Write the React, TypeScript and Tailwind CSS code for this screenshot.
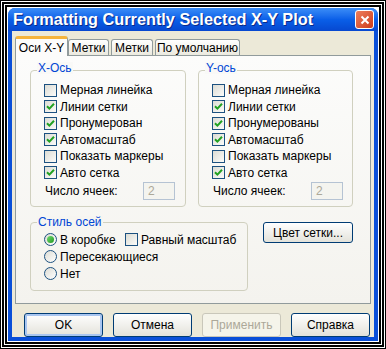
import React from "react";

const font = { fontFamily: '"Liberation Sans", Arial, sans-serif' };

const CheckBox: React.FC<{ checked?: boolean }> = ({ checked }) => (
  <span className="flex h-[13px] w-[13px] shrink-0 items-center justify-center border border-[#1c5180] bg-gradient-to-br from-[#dcdcd4] to-[#fbfbf9]">
    {checked && (
      <svg viewBox="0 0 9 9" className="h-[9px] w-[9px]">
        <path d="M1 4.2 L3.4 6.6 L8 1.8" stroke="#21a121" strokeWidth="2" fill="none" />
      </svg>
    )}
  </span>
);

const Radio: React.FC<{ checked?: boolean }> = ({ checked }) => (
  <span className="flex h-[13px] w-[13px] shrink-0 items-center justify-center rounded-full border border-[#1c5180] bg-gradient-to-br from-[#dcdcd4] to-white">
    {checked && <span className="h-[7px] w-[7px] rounded-full bg-gradient-to-br from-[#6fdc6f] to-[#1d981d]" />}
  </span>
);

const CheckRow: React.FC<{ label: string; checked?: boolean }> = ({ label, checked }) => (
  <div className="flex h-[16.5px] items-center gap-[3px]">
    <CheckBox checked={checked} />
    <span>{label}</span>
  </div>
);

const Button: React.FC<{ children: React.ReactNode; className?: string; disabled?: boolean; focused?: boolean }> = ({
  children,
  className = "",
  disabled,
  focused,
}) => (
  <div
    className={
      "flex items-center justify-center rounded-[3px] border " +
      (disabled
        ? "border-[#c9c7ba] bg-[#f5f4ea] text-[#aca899] "
        : "border-[#003c74] bg-gradient-to-b from-white to-[#e3e2da] text-black ") +
      (focused ? "shadow-[inset_0_0_0_2px_#a9c6f0] " : "") +
      className
    }
  >
    {children}
  </div>
);

const AxisGroup: React.FC<{ title: string; numbered: string; width: string }> = ({ title, numbered, width }) => (
  <div className={"relative h-[137px] rounded-[4px] border border-[#d0d0bf] " + width}>
    <span className="absolute left-[6px] top-[-9px] bg-[#f9f9f7] px-[1px] text-[#0046d5]">{title}</span>
    <div className="flex flex-col pl-[13px] pt-[11px]">
      <CheckRow label="Мерная линейка" />
      <CheckRow label="Линии сетки" checked />
      <CheckRow label={numbered} checked />
      <CheckRow label="Автомасштаб" checked />
      <CheckRow label="Показать маркеры" />
      <CheckRow label="Авто сетка" checked />
      <div className="mt-[1px] flex items-center">
        <span className="w-[99px] pl-[1px]">Число ячеек:</span>
        <span className="flex h-[18px] w-[32px] items-center border border-[#b5c3d3] bg-[#f4f4ef] pl-[4px] text-[#aca899]">
          2
        </span>
      </div>
    </div>
  </div>
);

const Tab: React.FC<{ label: string; active?: boolean; width: string }> = ({ label, active, width }) =>
  active ? (
    <div
      className={
        "relative z-10 flex h-[20px] items-center justify-center rounded-t-[3px] border-x border-t-[3px] border-x-[#919b9c] border-t-[#f5b43c] bg-[#fcfcfb] pt-[1px] " +
        width
      }
    >
      {label}
    </div>
  ) : (
    <div
      className={
        "flex h-[17px] items-center justify-center rounded-t-[3px] border border-b-0 border-[#919b9c] bg-gradient-to-b from-white to-[#eae8dd] " +
        width
      }
    >
      {label}
    </div>
  );

export default function App() {
  return (
    <div style={font} className="h-[349px] w-[386px] bg-white text-[12px] leading-none text-black">
      <div className="h-full w-full border border-black p-px">
        <div className="h-full w-full border-2 border-black p-px">
          <div className="h-full w-full border-2 border-black bg-white p-px">
            <div className="flex h-full w-full flex-col overflow-hidden rounded-t-[7px] bg-[#0a4fd8]">
              <div className="flex h-[23px] items-center justify-between bg-gradient-to-b from-[#3b8df7] via-[#0a5fe8] to-[#0748d0] pl-[5px] pr-[4px]">
                <span className="text-[16.3px] font-bold text-white [text-shadow:1px_1px_0_#0a2a8a]">
                  Formatting Currently Selected X-Y Plot
                </span>
                <span className="flex h-[19px] w-[19px] items-center justify-center rounded-[3px] border border-white bg-gradient-to-br from-[#ee7e5c] to-[#cc3a18]">
                  <svg viewBox="0 0 10 10" className="h-[10px] w-[10px]">
                    <path d="M1.5 1.5 L8.5 8.5 M8.5 1.5 L1.5 8.5" stroke="white" strokeWidth="2" />
                  </svg>
                </span>
              </div>
              <div className="mx-[4px] mb-[4px] flex flex-1 flex-col bg-[#ece9d8] px-[3px] pt-[5px]">
                <div className="flex items-end">
                  <Tab label="Оси X-Y" active width="w-[53px]" />
                  <div className="flex items-end gap-[2px]">
                    <Tab label="Метки" width="w-[41px]" />
                    <Tab label="Метки" width="w-[42px]" />
                    <Tab label="По умолчанию" width="w-[85px]" />
                  </div>
                </div>
                <div className="-mt-px h-[249px] w-[356px] border border-[#919b9c] bg-gradient-to-b from-[#fcfcfb] to-[#f4f3ee] pl-[14px] pt-[14px]">
                  <div className="flex gap-[12px]">
                    <AxisGroup title="X-Ось" numbered="Пронумерован" width="w-[156px]" />
                    <AxisGroup title="Y-ось" numbered="Пронумерованы" width="w-[155px]" />
                  </div>
                  <div className="mt-[15px] flex items-start gap-[15px]">
                    <div className="relative h-[69px] w-[218px] rounded-[4px] border border-[#d0d0bf]">
                      <span className="absolute left-[6px] top-[-7px] bg-[#f6f5f1] px-[1px] text-[#0046d5]">
                        Стиль осей
                      </span>
                      <div className="flex flex-col gap-[4px] pl-[13px] pt-[10px]">
                        <div className="flex h-[13px] items-center">
                          <Radio checked />
                          <span className="ml-[3px] w-[65px]">В коробке</span>
                          <CheckBox />
                          <span className="ml-[3px]">Равный масштаб</span>
                        </div>
                        <div className="flex h-[13px] items-center gap-[3px]">
                          <Radio />
                          <span>Пересекающиеся</span>
                        </div>
                        <div className="flex h-[13px] items-center gap-[3px]">
                          <Radio />
                          <span>Нет</span>
                        </div>
                      </div>
                    </div>
                    <Button className="h-[21px] w-[90px]">Цвет сетки...</Button>
                  </div>
                </div>
                <div className="mt-[9px] flex gap-[10px] pl-[9px]">
                  <Button focused className="h-[24px] w-[79px]">OK</Button>
                  <Button className="h-[24px] w-[79px]">Отмена</Button>
                  <Button disabled className="h-[24px] w-[79px]">Применить</Button>
                  <Button className="h-[24px] w-[79px]">Справка</Button>
                </div>
              </div>
            </div>
          </div>
        </div>
      </div>
    </div>
  );
}
